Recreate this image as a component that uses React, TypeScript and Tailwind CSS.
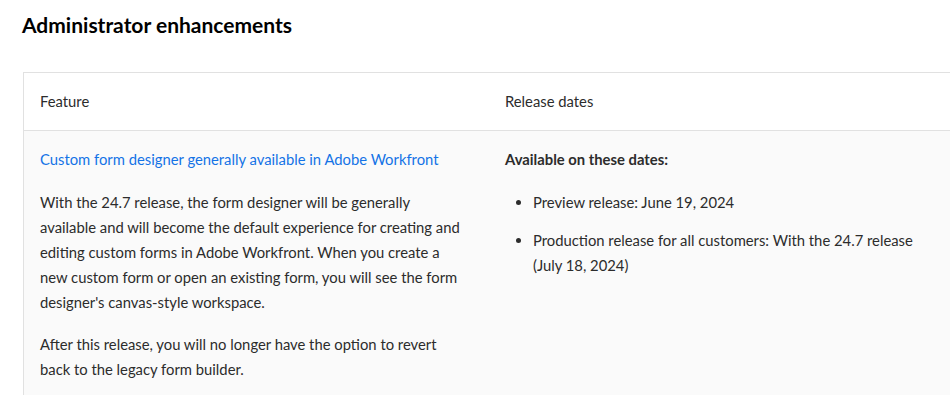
import React from 'react';

const App: React.FC = () => {
  return (
    <div className="w-[950px] h-[395px] overflow-hidden bg-white text-[#2c2c2c] font-['Lato',sans-serif]">
      <h2 className="pl-[22px] pt-[12px] text-[21px] leading-[26px] font-bold text-[#000000]">
        Administrator enhancements
      </h2>
      <div className="ml-[23px] mt-[34px] w-[960px] border-l border-t border-[#e1e1e1]">
        <div className="flex h-[58px] items-center border-b border-[#e1e1e1] bg-white text-[14.8px]">
          <div className="w-[465px] pl-[16px]">Feature</div>
          <div className="pl-[16px]">Release dates</div>
        </div>
        <div className="flex bg-[#fafafa] text-[14.8px] leading-[25px] pb-[20px]">
          <div className="w-[465px] pl-[16px] pr-[20px] pt-[16px]">
            <a className="text-[#1473e6]">Custom form designer generally available in Adobe Workfront</a>
            <p className="mt-[18px]">
              With the 24.7 release, the form designer will be generally available and will become the default experience for creating and editing custom forms in Adobe Workfront. When you create a new custom form or open an existing form, you will see the form designer's canvas-style workspace.
            </p>
            <p className="mt-[17px]">
              After this release, you will no longer have the option to revert back to the legacy form builder.
            </p>
          </div>
          <div className="flex-1 pl-[16px] pt-[16px]">
            <p className="font-bold">Available on these dates:</p>
            <ul className="mt-[18px] list-disc pl-[28px] space-y-[13px] w-[440px]">
              <li>Preview release: June 19, 2024</li>
              <li>Production release for all customers: With the 24.7 release (July 18, 2024)</li>
            </ul>
          </div>
        </div>
      </div>
    </div>
  );
};

export default App;
